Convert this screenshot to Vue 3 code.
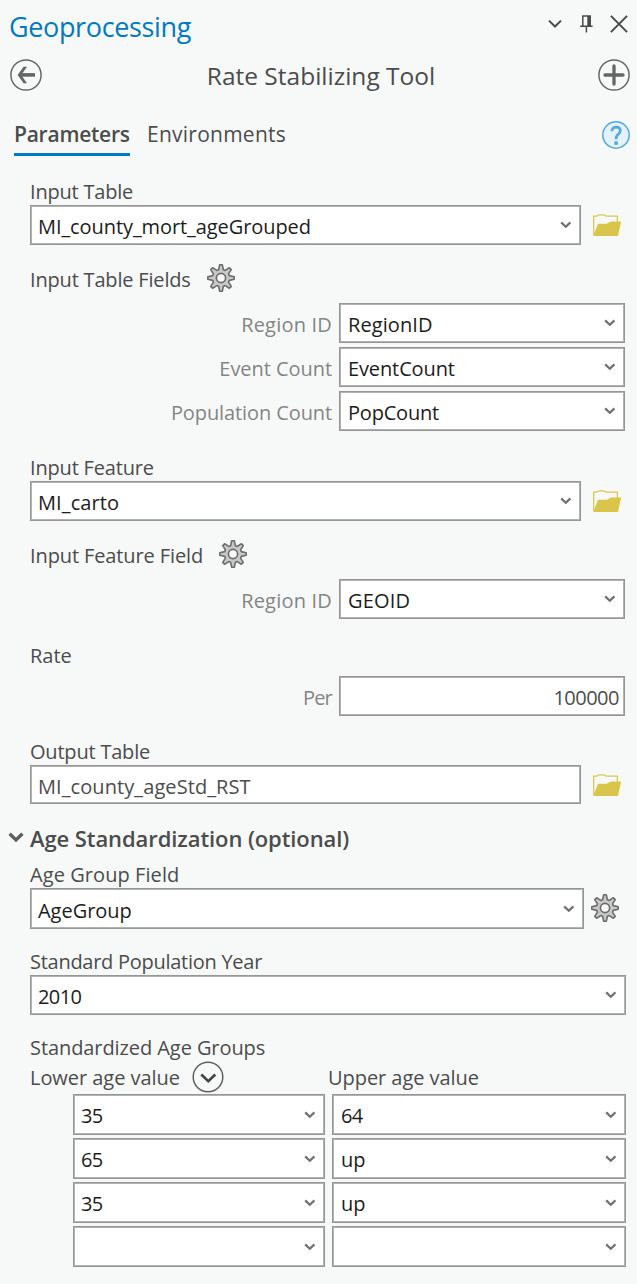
<script setup>
import { h } from 'vue'

const track = (px) => ({ letterSpacing: `${px}px` })

const gearPoints = (() => {
  const pts = []
  for (let i = 0; i < 8; i++) {
    const a = (i * Math.PI) / 4
    const shape = [[-2.4, 8.3], [-1.3, 13.2], [1.3, 13.2], [2.4, 8.3]]
    for (const [x, y] of shape) {
      const px = 14 + x * Math.cos(a) + y * Math.sin(a)
      const py = 14 + x * Math.sin(a) - y * Math.cos(a)
      pts.push(`${px.toFixed(2)},${py.toFixed(2)}`)
    }
  }
  return pts.join(' ')
})()

const Gear = () =>
  h('svg', { width: 28, height: 28, viewBox: '0 0 28 28' }, [
    h('polygon', { points: gearPoints, fill: '#c8c8c8', stroke: '#6d6d6d', 'stroke-width': 1.6, 'stroke-linejoin': 'round' }),
    h('circle', { cx: 14, cy: 14, r: 4.6, fill: '#f7f9f8', stroke: '#6d6d6d', 'stroke-width': 1.7 })
  ])

const Folder = () =>
  h('svg', { width: 29, height: 23, viewBox: '0 0 29 23' }, [
    h('path', { d: 'M.7 21V2.2H3.8Q5 .8 6.5 .8H10.5Q12 .8 13 2.2H24.4V8', fill: 'none', stroke: '#dbc64f', 'stroke-width': 1.3 }),
    h('path', { d: 'M.3 22L5 9.8H13.5Q15.5 9.6 17.5 7.6H28.1L25 22Z', fill: '#d9c54a' })
  ])

const Chevron = () =>
  h('svg', { width: 12, height: 8, viewBox: '0 0 12 8' }, [
    h('path', { d: 'M1.2 1.4L5.8 5.8L10.4 1.4', fill: 'none', stroke: '#707070', 'stroke-width': 2.2 })
  ])

const tableFields = [
  { label: 'Region ID', value: 'RegionID', lt: 0.2, vt: 0.08 },
  { label: 'Event Count', value: 'EventCount', lt: -0.05, vt: -0.12 },
  { label: 'Population Count', value: 'PopCount', lt: -0.1, vt: -0.2 }
]

const ageRows = [
  { lower: '35', upper: '64' },
  { lower: '65', upper: 'up' },
  { lower: '35', upper: 'up' },
  { lower: '', upper: '' }
]
</script>

<template>
  <main class="pane">
    <header class="titlebar">
      <h1>Geoprocessing</h1>
      <div class="window-icons">
        <svg width="14" height="10" viewBox="0 0 14 10"><path d="M1 1.6L7 7.5L13 1.6" fill="none" stroke="#4a4a4a" stroke-width="2" /></svg>
        <svg class="pin" width="13" height="18" viewBox="0 0 13 18">
          <path d="M2.8 11V.9H10.2V11" fill="none" stroke="#4a4a4a" stroke-width="1.5" />
          <path d="M7.3 1H10.6V11H7.3Z" fill="#4a4a4a" />
          <path d="M.2 11.3H12.6M6.4 11V17.6" fill="none" stroke="#4a4a4a" stroke-width="1.5" />
        </svg>
        <svg width="18" height="18" viewBox="0 0 18 18"><path d="M.9 .9L17.1 17.1M17.1 .9L.9 17.1" stroke="#4a4a4a" stroke-width="2" /></svg>
      </div>
    </header>

    <div class="toolbar">
      <svg width="32" height="32" viewBox="0 0 32 32">
        <circle cx="16" cy="16" r="15.1" fill="none" stroke="#666" stroke-width="1.5" />
        <path d="M25 15.9H10" stroke="#666" stroke-width="3.6" />
        <path d="M13.6 7.8H17L11.2 15.9L17 24.2H13.6L7.6 15.9Z" fill="#666" />
      </svg>
      <h2>Rate Stabilizing Tool</h2>
      <svg width="32" height="32" viewBox="0 0 32 32">
        <circle cx="16" cy="16" r="15.1" fill="none" stroke="#666" stroke-width="1.5" />
        <path d="M7 16H25M16 7V25" stroke="#666" stroke-width="3.3" stroke-linecap="round" />
      </svg>
    </div>

    <nav class="tabs">
      <span class="tab active">Parameters</span>
      <span class="tab">Environments</span>
      <svg width="28" height="28" viewBox="0 0 28 28">
        <circle cx="14" cy="14" r="13.2" fill="#e4f2fc" stroke="#54a8de" stroke-width="1.5" />
        <path d="M9.9 10.2C9.9 7.5 11.6 6.1 14.2 6.1C16.7 6.1 18.3 7.5 18.3 9.7C18.3 13 14.1 13.4 14.1 17V18.3" fill="none" stroke="#54a8de" stroke-width="2.7" />
        <path d="M12.3 20.4H15.9V23.8H12.3Z" fill="#54a8de" />
      </svg>
    </nav>

    <section class="form">
      <div class="label" :style="track(-0.2)">Input Table</div>
      <div class="line">
        <div class="box"><span :style="track(-0.08)">MI_county_mort_ageGrouped</span><Chevron /></div>
        <Folder class="folder" />
      </div>

      <div class="label with-gear"><span :style="track(-0.18)">Input Table Fields</span><Gear /></div>
      <div class="fields">
        <div v-for="f in tableFields" :key="f.label" class="field">
          <span class="caption" :style="track(f.lt)">{{ f.label }}</span>
          <div class="box"><span :style="track(f.vt)">{{ f.value }}</span><Chevron /></div>
        </div>
      </div>

      <div class="label feature" :style="track(-0.18)">Input Feature</div>
      <div class="line">
        <div class="box"><span :style="track(0.1)">MI_carto</span><Chevron /></div>
        <Folder class="folder" />
      </div>

      <div class="label with-gear"><span :style="track(-0.11)">Input Feature Field</span><Gear /></div>
      <div class="field">
        <span class="caption" :style="track(0.2)">Region ID</span>
        <div class="box"><span :style="track(0.2)">GEOID</span><Chevron /></div>
      </div>

      <div class="label rate">Rate</div>
      <div class="field">
        <span class="caption" :style="track(-0.8)">Per</span>
        <div class="box number"><span :style="track(-0.5)">100000</span></div>
      </div>

      <div class="label output" :style="track(-0.2)">Output Table</div>
      <div class="line">
        <div class="box plain"><span :style="track(0.08)">MI_county_ageStd_RST</span></div>
        <Folder class="folder" />
      </div>

      <div class="group">
        <svg width="16" height="11" viewBox="0 0 16 11"><path d="M1.6 1.8L8 7.9L14.4 1.8" fill="none" stroke="#5e5e5e" stroke-width="3.4" /></svg>
        <h3>Age Standardization (optional)</h3>
      </div>

      <div class="label" :style="track(0.07)">Age Group Field</div>
      <div class="line age">
        <div class="box"><span :style="track(-0.03)">AgeGroup</span><Chevron /></div>
        <Gear />
      </div>

      <div class="label year" :style="track(-0.27)">Standard Population Year</div>
      <div class="box wide"><span :style="track(-0.6)">2010</span><Chevron /></div>

      <div class="label groups" :style="track(-0.08)">Standardized Age Groups</div>
      <div class="columns">
        <span class="lower">Lower age value</span>
        <svg width="32" height="32" viewBox="0 0 32 32">
          <circle cx="16" cy="16" r="14.8" fill="none" stroke="#606060" stroke-width="1.5" />
          <path d="M9.3 13.6L16.3 20.2L23.3 13.6" fill="none" stroke="#444" stroke-width="2.7" />
        </svg>
        <span class="upper">Upper age value</span>
      </div>
      <div class="ages">
        <template v-for="(r, i) in ageRows" :key="i">
          <div class="box tall"><span class="digits">{{ r.lower }}</span><Chevron /></div>
          <div class="box tall"><span :class="{ digits: r.upper !== 'up' }">{{ r.upper }}</span><Chevron /></div>
        </template>
      </div>
    </section>
  </main>
</template>

<style>
body {
  background: #f7f9f8;
}
</style>

<style scoped>
.pane {
  box-sizing: border-box;
  width: 637px;
  height: 1284px;
  overflow: hidden;
  background: #f7f9f8;
  color: #4c4c4c;
  font: 20px/28px "Open Sans", "Noto Sans", sans-serif;
  white-space: nowrap;
}
svg {
  display: block;
  flex: none;
}
h1, h2, h3 {
  margin: 0;
  font-weight: 400;
}
.titlebar {
  display: flex;
  justify-content: space-between;
  height: 50px;
  padding: 0 9px 0 9px;
}
h1 {
  padding-top: 8px;
  color: #007ac2;
  font-size: 27px;
  line-height: 38px;
  letter-spacing: -0.36px;
}
.window-icons {
  display: flex;
  align-items: center;
  gap: 18px;
  height: 48px;
}
.window-icons svg:last-child {
  margin-left: -1px;
}
.toolbar {
  display: flex;
  align-items: center;
  justify-content: space-between;
  height: 50px;
  padding: 0 7px 0 10px;
}
h2 {
  padding-top: 1px;
  margin-left: 2px;
  font-size: 24.5px;
  line-height: 34px;
  letter-spacing: 0;
}
.tabs {
  display: flex;
  align-items: flex-start;
  height: 77px;
  padding: 19px 7.5px 0 14px;
  box-sizing: border-box;
  font-size: 21px;
  line-height: 30px;
}
.tab {
  letter-spacing: 0.25px;
}
.tab.active {
  box-sizing: border-box;
  width: 116px;
  height: 37px;
  margin-right: 17px;
  border-bottom: 3.5px solid #007ac2;
  font-weight: 600;
  letter-spacing: -0.24px;
}
.tabs svg {
  margin: 1.5px 0 0 auto;
}
.form {
  padding: 0 11px 0 30px;
}
.label {
  box-sizing: border-box;
  height: 28px;
  padding-top: 1px;
}
.with-gear {
  display: flex;
  gap: 16px;
  margin: 20px 0 10px;
}
.with-gear svg {
  margin-top: -2px;
}
.line {
  display: flex;
  align-items: center;
  gap: 12px;
}
.line .box {
  width: 551px;
}
.line.age {
  gap: 7px;
}
.line.age .box {
  width: 554px;
  height: 41px;
  padding-top: 5px;
}
.line.age > svg {
  margin-top: -1px;
}
.folder {
  margin-top: 1px;
}
.box {
  display: flex;
  align-items: center;
  justify-content: space-between;
  box-sizing: border-box;
  height: 40px;
  padding: 4px 8px 0 7px;
  border: 1px solid #969696;
  box-shadow: inset 0 0 0 1px #b2b2b2;
  background: #fff;
  color: #1c1c1c;
}
.box svg {
  margin-top: -4px;
}
.box.tall {
  height: 41px;
  padding-top: 3px;
}
.tall svg {
  margin-top: -2px;
}
.box.plain {
  height: 39px;
  padding-top: 4px;
  color: #4c4c4c;
}
.field .box {
  padding-left: 8px;
}
.field .number {
  justify-content: flex-end;
  padding-right: 5px;
  color: #4c4c4c;
}
.wide {
  width: 596px;
}
.fields {
  display: grid;
  gap: 4px;
}
.field {
  display: grid;
  grid-template-columns: 302px 286px;
  gap: 7px;
}
.caption {
  padding-top: 8px;
  height: 28px;
  color: #858585;
  text-align: right;
}
.feature {
  margin-top: 22px;
}
.rate {
  margin: 22px 0 7px;
}
.output {
  margin-top: 21px;
}
.group {
  display: flex;
  align-items: center;
  gap: 6px;
  height: 30px;
  margin: 19px 0 7px -22px;
}
h3 {
  font-size: 22px;
  font-weight: 600;
  line-height: 30px;
  letter-spacing: -0.09px;
}
.group svg {
  margin-top: -1px;
}
.year,
.groups {
  margin-top: 18px;
}
.columns {
  display: grid;
  grid-template-columns: 162px 136px 1fr;
  height: 33px;
  letter-spacing: -0.05px;
}
.columns svg {
  margin-top: -0.5px;
}
.columns span {
  padding-top: 3px;
}
.ages {
  display: grid;
  grid-template-columns: 252px 294px;
  gap: 3px 7px;
  padding-left: 43px;
}
.digits {
  letter-spacing: -0.7px;
}
.ages .box:nth-child(even) {
  padding-left: 8px;
}
</style>
